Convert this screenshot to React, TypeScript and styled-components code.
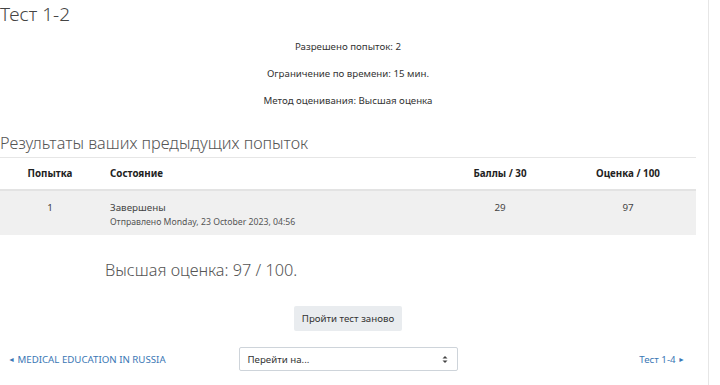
import React from "react";
import styled, { createGlobalStyle } from "styled-components";

const GlobalStyle = createGlobalStyle`
  html, body {
    margin: 0;
    padding: 0;
    background: #ffffff;
    font-family: "Noto Sans", "Open Sans", sans-serif;
    color: #333;
  }
`;

const Page = styled.div`
  width: 708px;
  height: 385px;
  border-right: 1px solid #e6e6e6;
  overflow: hidden;
`;

const Content = styled.div`
  width: 696px;
`;

const Title = styled.h2`
  margin: 0;
  padding-top: 1px;
  font-size: 19px;
  font-weight: 300;
  line-height: 26px;
  color: #444;
`;

const InfoBox = styled.div`
  margin-top: 12px;
  display: flex;
  flex-direction: column;
  align-items: center;
  gap: 12px;
`;

const InfoLine = styled.p`
  margin: 0;
  font-size: 9.7px;
  line-height: 15px;
  color: #333;
`;

const SectionTitle = styled.h3`
  margin: 22px 0 0;
  font-size: 16.3px;
  font-weight: 300;
  line-height: 26px;
  color: #555;
`;

const Table = styled.div`
  margin-top: 1px;
  border-top: 1px solid #e6e6e6;
`;

const Row = styled.div<{ $head?: boolean }>`
  display: grid;
  grid-template-columns: 100px 340px 120px 136px;
  height: ${({ $head }) => ($head ? "31px" : "44px")};
  background: ${({ $head }) => ($head ? "#fff" : "#f0f0f0")};
  border-bottom: ${({ $head }) => ($head ? "2px solid #e3e3e3" : "none")};
  font-size: ${({ $head }) => ($head ? "9.8px" : "9.8px")};
  font-weight: ${({ $head }) => ($head ? 700 : 400)};
  color: ${({ $head }) => ($head ? "#222" : "#444")};
  align-items: ${({ $head }) => ($head ? "center" : "start")};
`;

const Cell = styled.div<{ $left?: boolean; $top?: number }>`
  text-align: ${({ $left }) => ($left ? "left" : "center")};
  padding-left: ${({ $left }) => ($left ? "10px" : "0")};
  padding-top: ${({ $top }) => $top ?? 0}px;
  line-height: 15px;
`;

const SubText = styled.div`
  font-size: 8.7px;
  color: #555;
  line-height: 14px;
`;

const BestGrade = styled.div`
  margin-top: 24px;
  padding-left: 105px;
  font-size: 16.3px;
  font-weight: 300;
  line-height: 22px;
  color: #555;
`;

const ButtonRow = styled.div`
  margin-top: 25px;
  display: flex;
  justify-content: center;
`;

const Button = styled.button`
  height: 25px;
  padding: 0 8px;
  border: none;
  border-radius: 2px;
  background: #e9ecef;
  font-family: inherit;
  font-size: 9.7px;
  color: #333;
`;

const NavRow = styled.div`
  margin-top: 16px;
  display: grid;
  grid-template-columns: 1fr 219px 1fr;
  align-items: center;
`;

const NavLink = styled.a<{ $right?: boolean }>`
  font-size: 9.7px;
  color: #3a78b5;
  text-decoration: none;
  padding-left: ${({ $right }) => ($right ? "0" : "8px")};
  padding-right: ${({ $right }) => ($right ? "11px" : "0")};
  justify-self: ${({ $right }) => ($right ? "end" : "start")};
`;

const Arrow = styled.span`
  font-size: 7px;
  vertical-align: 1px;
`;

const Select = styled.div`
  height: 24px;
  border: 1px solid #ced4da;
  border-radius: 2px;
  display: flex;
  align-items: center;
  justify-content: space-between;
  padding: 0 9px 0 8px;
  font-size: 9.7px;
  color: #333;
  box-sizing: border-box;
`;

const Caret = () => (
  <svg width="6" height="9" viewBox="0 0 6 9">
    <path d="M0.5 3.5 L3 1 L5.5 3.5 Z" fill="#444" />
    <path d="M0.5 5.5 L3 8 L5.5 5.5 Z" fill="#444" />
  </svg>
);

export default function App() {
  return (
    <>
      <GlobalStyle />
      <Page>
        <Content>
          <Title>Тест 1-2</Title>
          <InfoBox>
            <InfoLine>Разрешено попыток: 2</InfoLine>
            <InfoLine>Ограничение по времени: 15 мин.</InfoLine>
            <InfoLine>Метод оценивания: Высшая оценка</InfoLine>
          </InfoBox>
          <SectionTitle>Результаты ваших предыдущих попыток</SectionTitle>
          <Table>
            <Row $head>
              <Cell>Попытка</Cell>
              <Cell $left>Состояние</Cell>
              <Cell>Баллы / 30</Cell>
              <Cell>Оценка / 100</Cell>
            </Row>
            <Row>
              <Cell $top={9}>1</Cell>
              <Cell $left $top={9}>
                Завершены
                <SubText>Отправлено Monday, 23 October 2023, 04:56</SubText>
              </Cell>
              <Cell $top={9}>29</Cell>
              <Cell $top={9}>97</Cell>
            </Row>
          </Table>
          <BestGrade>Высшая оценка: 97 / 100.</BestGrade>
          <ButtonRow>
            <Button>Пройти тест заново</Button>
          </ButtonRow>
          <NavRow>
            <NavLink href="#">
              <Arrow>◄</Arrow> MEDICAL EDUCATION IN RUSSIA
            </NavLink>
            <Select>
              <span>Перейти на...</span>
              <Caret />
            </Select>
            <NavLink href="#" $right>
              Тест 1-4 <Arrow>►</Arrow>
            </NavLink>
          </NavRow>
        </Content>
      </Page>
    </>
  );
}
